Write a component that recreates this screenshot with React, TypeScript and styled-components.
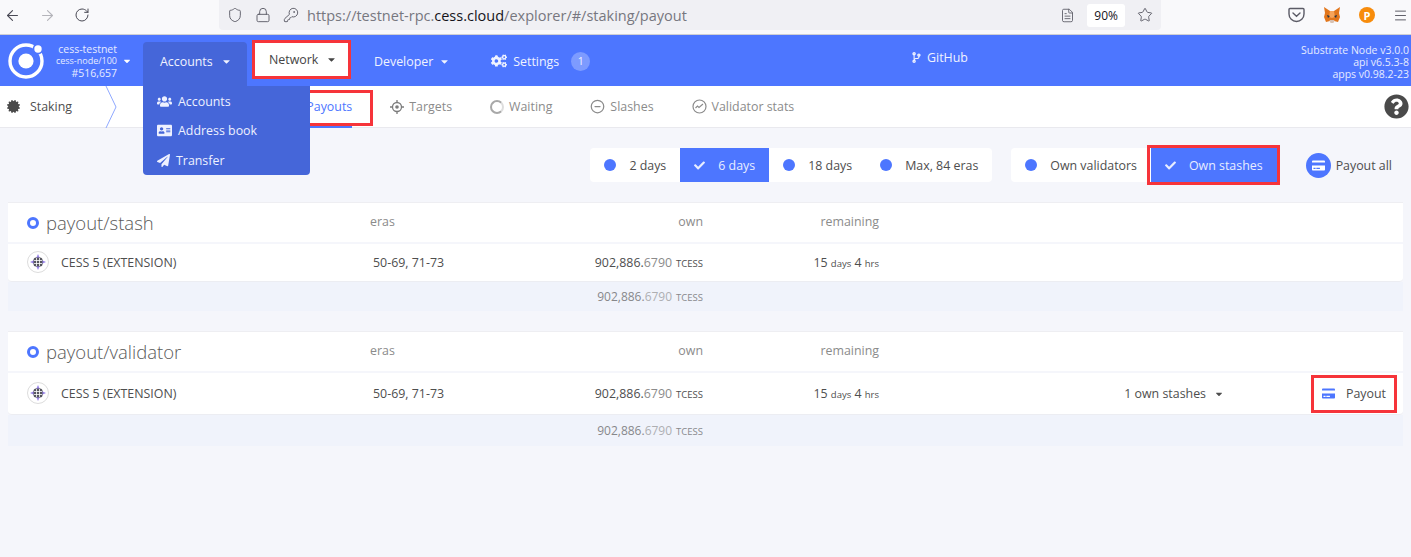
import { FC, ReactNode } from "react";

import styled, { createGlobalStyle } from "styled-components";

import {
  ArrowLeft,
  ArrowRight,
  FileText,
  KeyRound,
  Lock,
  Menu,
  RotateCw,
  Shield,
  Star,
} from "lucide-react";
import {
  FaAddressCard,
  FaCaretDown,
  FaCertificate,
  FaCheck,
  FaCodeBranch,
  FaCogs,
  FaCreditCard,
  FaPaperPlane,
  FaQuestionCircle,
  FaUsers,
} from "react-icons/fa";
import { FiMinusCircle } from "react-icons/fi";

const BLUE = "#4d76ff";
const DARK_BLUE = "#4566d9";
const TEXT = "#4e4e4e";
const MUTED = "#8b8b8b";
const RED = "#f6343a";

const GlobalStyle = createGlobalStyle`
  html, body {
    margin: 0;
    padding: 0;
    background: #f5f6fb;
    overflow: hidden;
  }
  body {
    font-family: "Open Sans", "Noto Sans", sans-serif;
    font-size: 12px;
    color: ${TEXT};
  }
`;

const Logo = () => (
  <svg width="38" height="38" viewBox="0 0 38 38">
    <circle cx="19" cy="19" r="16" fill="none" stroke="#fff" strokeWidth="3.4" />
    <circle cx="19" cy="19" r="7.6" fill="#fff" />
    <circle cx="31" cy="7" r="5.4" fill={BLUE} />
    <circle cx="31" cy="7" r="3.7" fill="#fff" />
  </svg>
);

const Pocket = () => (
  <svg width="17" height="16" viewBox="0 0 17 16" fill="none" stroke="#5b5b66" strokeWidth="1.4">
    <path d="M2 1.5h13a1 1 0 0 1 1 1V7a7.500 7.500 0 0 1-15 0V2.500a1 1 0 0 1 1-1z" />
    <path d="M5 6l3.500 3.200L12 6" strokeLinecap="round" />
  </svg>
);

const Fox = () => (
  <svg width="18" height="17" viewBox="0 0 18 17">
    <path d="M1 0l6 4h4l6-4-1 6 1 4-2 5-4-1-2 1-2-1-4 1-2-5 1-4z" fill="#e2761b" />
    <path d="M7 4h4l1 6-3 1-3-1z" fill="#f6a45a" />
    <path d="M4 8l3 1-2 2zM14 8l-3 1 2 2z" fill="#233447" />
    <path d="M6.500 13h5l-1 3h-3z" fill="#d7c1b3" />
  </svg>
);

const ChartCircle = () => (
  <svg width="15" height="15" viewBox="0 0 15 15" fill="none" stroke="#8b8b8b">
    <circle cx="7.500" cy="7.500" r="6.500" strokeWidth="1.200" />
    <path d="M3.500 9l2-2 1.500 1.500L11 5" strokeWidth="1.100" />
  </svg>
);

const TargetIcon = () => (
  <svg width="14" height="14" viewBox="0 0 14 14" fill="none" stroke="#7c7c7c">
    <circle cx="7" cy="7" r="4.500" strokeWidth="1.300" />
    <circle cx="7" cy="7" r="1.800" fill="#7c7c7c" stroke="none" />
    <path d="M7 0v2.500M7 11.500V14M0 7h2.500M11.500 7H14" strokeWidth="1.300" />
  </svg>
);

const Identicon = () => (
  <IdenticonWrap>
    <svg width="22" height="22" viewBox="0 0 22 22">
      <circle cx="11" cy="11" r="10.500" fill="#fff" stroke="#dcdcdc" />
      <path d="M11 3l2.500 5.500L19 11l-5.500 2.500L11 19l-2.500-5.500L3 11l5.500-2.500z" fill="#9b86e8" />
      <rect x="6.500" y="6.500" width="9" height="9" rx="2.500" fill="#55555f" />
      <path d="M9.500 7v8M12.500 7v8M7 9.500h8M7 12.500h8" stroke="#fff" strokeWidth="0.800" />
    </svg>
  </IdenticonWrap>
);

const AccountCell: FC = () => (
  <NameCell>
    <Identicon />
    <span>CESS 5 (EXTENSION)</span>
  </NameCell>
);

const Balance: FC<{ faded?: boolean }> = ({ faded }) => (
  <BalanceValue $faded={faded}>
    902,886.<Decimals>6790</Decimals>
    <Unit>TCESS</Unit>
  </BalanceValue>
);

const Remaining: FC = () => (
  <RemainingValue>
    15 <small>days</small> 4 <small>hrs</small>
  </RemainingValue>
);

const PayoutSection: FC<{ title: string; action?: ReactNode }> = ({ title, action }) => (
  <Section>
    <HeaderRow>
      <Title>
        <TitleDot />
        {title}
      </Title>
      <HeaderLabel>eras</HeaderLabel>
      <HeaderLabel $right>own</HeaderLabel>
      <HeaderLabel $right>remaining</HeaderLabel>
    </HeaderRow>
    <BodyRow $tall={!!action}>
      <AccountCell />
      <ErasCell>50-69, 71-73</ErasCell>
      <Balance />
      <Remaining />
      <ActionCell>{action}</ActionCell>
    </BodyRow>
    <FooterRow $tall={!!action}>
      <span />
      <span />
      <Balance faded />
    </FooterRow>
  </Section>
);

const App: FC = () => (
  <>
    <GlobalStyle />
    <BrowserBar>
      <NavButtons>
        <ArrowLeft size={17} strokeWidth={1.5} color="#4a4a55" />
        <ArrowRight size={17} strokeWidth={1.5} color="#b4b4ba" />
        <RotateCw size={16} strokeWidth={1.5} color="#4a4a55" />
      </NavButtons>
      <UrlBar>
        <UrlIcons>
          <Shield size={16} strokeWidth={1.4} />
          <Lock size={16} strokeWidth={1.4} />
          <KeyRound size={16} strokeWidth={1.4} />
        </UrlIcons>
        <UrlText>
          https://testnet-rpc.<strong>cess.cloud</strong>/explorer/#/staking/payout
        </UrlText>
        <UrlEnd>
          <FileText size={15} strokeWidth={1.4} />
          <ZoomBadge>90%</ZoomBadge>
          <Star size={16} strokeWidth={1.4} />
        </UrlEnd>
      </UrlBar>
      <Extensions>
        <Pocket />
        <Fox />
        <PBadge>P</PBadge>
        <Menu size={15} strokeWidth={1.4} color="#4a4a55" />
      </Extensions>
    </BrowserBar>

    <AppBar>
      <Logo />
      <ChainInfo>
        <span>cess-testnet</span>
        <ChainNode>cess-node/100</ChainNode>
        <span>#516,657</span>
      </ChainInfo>
      <ChainCaret>
        <FaCaretDown size={10} />
      </ChainCaret>
      <MainMenu>
        <AccountsItem>
          Accounts <FaCaretDown size={11} />
          <Dropdown>
            <DropdownItem>
              <FaUsers size={15} />
              Accounts
            </DropdownItem>
            <DropdownItem>
              <FaAddressCard size={15} />
              Address book
            </DropdownItem>
            <DropdownItem>
              <FaPaperPlane size={13} />
              Transfer
            </DropdownItem>
          </Dropdown>
        </AccountsItem>
        <NetworkItem>
          Network <FaCaretDown size={11} />
        </NetworkItem>
        <MenuItem>
          Developer <FaCaretDown size={11} />
        </MenuItem>
        <MenuItem>
          <FaCogs size={16} />
          Settings
          <CountBadge>1</CountBadge>
        </MenuItem>
      </MainMenu>
      <GitHubLink>
        <FaCodeBranch size={11} />
        GitHub
      </GitHubLink>
      <Versions>
        <span>Substrate Node v3.0.0</span>
        <span>api v6.5.3-8</span>
        <span>apps v0.98.2-23</span>
      </Versions>
    </AppBar>

    <SubNav>
      <SectionLabel>
        <FaCertificate size={13} color="#4a4a4a" />
        Staking
        <Chevron width="12" height="42" viewBox="0 0 12 42">
          <path d="M1 0l10 21L1 42" fill="none" stroke="#8fa8ff" />
        </Chevron>
      </SectionLabel>
      <Tabs>
        <Tab>Account actions</Tab>
        <PayoutsTab>Payouts</PayoutsTab>
        <Tab>
          <TargetIcon />
          Targets
        </Tab>
        <Tab>
          <WaitingRing />
          Waiting
        </Tab>
        <Tab>
          <FiMinusCircle size={15} />
          Slashes
        </Tab>
        <Tab>
          <ChartCircle />
          Validator stats
        </Tab>
      </Tabs>
      <HelpIcon>
        <FaQuestionCircle size={25} />
      </HelpIcon>
    </SubNav>

    <Content>
      <Controls>
        <ToggleGroup>
          <Toggle>
            <Dot />2 days
          </Toggle>
          <Toggle $active>
            <FaCheck size={11} />6 days
          </Toggle>
          <Toggle>
            <Dot />
            18 days
          </Toggle>
          <Toggle>
            <Dot />
            Max, 84 eras
          </Toggle>
        </ToggleGroup>
        <ToggleGroup>
          <Toggle>
            <Dot />
            Own validators
          </Toggle>
          <Toggle $active $marked>
            <FaCheck size={11} />
            Own stashes
          </Toggle>
        </ToggleGroup>
        <PayoutAll>
          <PayoutAllIcon>
            <FaCreditCard size={13} />
          </PayoutAllIcon>
          Payout all
        </PayoutAll>
      </Controls>

      <PayoutSection title="payout/stash" />
      <PayoutSection
        title="payout/validator"
        action={
          <>
            <StashCount>
              1 own stashes <FaCaretDown size={10} />
            </StashCount>
            <PayoutButton>
              <FaCreditCard size={13} color={BLUE} />
              Payout
            </PayoutButton>
          </>
        }
      />
    </Content>
  </>
);

export default App;

const BrowserBar = styled.div`
  display: flex;
  align-items: flex-start;
  height: 34px;
  background: #f9f9fb;
  border-bottom: 1px solid #cfcfd3;
`;

const NavButtons = styled.div`
  display: flex;
  align-items: center;
  gap: 18px;
  width: 219px;
  height: 30px;
  padding-left: 4px;
  box-sizing: border-box;
`;

const UrlBar = styled.div`
  display: flex;
  align-items: center;
  width: 942px;
  height: 30px;
  background: #f0f0f4;
  border-radius: 0 0 4px 4px;
  color: #5b5b66;
`;

const UrlIcons = styled.div`
  display: flex;
  align-items: center;
  gap: 12px;
  padding-left: 8px;
`;

const UrlText = styled.div`
  flex: 1;
  margin-left: 8px;
  font-size: 14.5px;
  color: #77777f;
  strong {
    font-weight: 400;
    color: #15141a;
  }
`;

const UrlEnd = styled.div`
  display: flex;
  align-items: center;
  gap: 12px;
  padding-right: 8px;
`;

const ZoomBadge = styled.span`
  padding: 3px 7px;
  background: #fff;
  border-radius: 3px;
  font-size: 12px;
  color: #15141a;
`;

const Extensions = styled.div`
  display: flex;
  align-items: center;
  gap: 18px;
  height: 30px;
  padding-left: 127px;
`;

const PBadge = styled.span`
  display: flex;
  align-items: center;
  justify-content: center;
  width: 16px;
  height: 16px;
  border-radius: 50%;
  background: #f78c0c;
  color: #fff;
  font-size: 11px;
  font-weight: 700;
`;

const AppBar = styled.header`
  position: relative;
  display: flex;
  align-items: center;
  height: 51px;
  padding-left: 7px;
  background: ${BLUE};
  color: #fff;
`;

const ChainInfo = styled.div`
  display: flex;
  flex-direction: column;
  align-items: flex-end;
  width: 72px;
  font-size: 10.5px;
  line-height: 12px;
  color: #e6ebff;
`;

const ChainNode = styled.span`
  font-size: 9px;
`;

const ChainCaret = styled.span`
  display: flex;
  margin-left: 5px;
  width: 21px;
`;

const MainMenu = styled.nav`
  display: flex;
  align-items: stretch;
  align-self: flex-end;
  height: 44px;
  color: #f0f3ff;
  font-size: 12.4px;
`;

const MenuItem = styled.div`
  display: flex;
  align-items: center;
  gap: 6px;
  padding: 0 18px 6px 23px;
  svg {
    flex-shrink: 0;
  }
`;

const AccountsItem = styled(MenuItem)`
  position: relative;
  width: 104px;
  box-sizing: border-box;
  padding: 0 0 6px 17px;
  gap: 8px;
  background: ${DARK_BLUE};
  border-radius: 4px 4px 0 0;
`;

const NetworkItem = styled(MenuItem)`
  align-self: flex-start;
  box-sizing: border-box;
  width: 99px;
  height: 39px;
  margin: -2px 0 0 5px;
  padding: 0 0 0 14px;
  gap: 8px;
  background: #fff;
  color: #444;
  border: 3px solid ${RED};
`;

const Dropdown = styled.div`
  position: absolute;
  top: 44px;
  left: 0;
  z-index: 5;
  display: flex;
  flex-direction: column;
  width: 167px;
  height: 89px;
  padding-top: 1px;
  box-sizing: border-box;
  background: ${DARK_BLUE};
  border-radius: 0 0 4px 4px;
`;

const DropdownItem = styled.div`
  display: flex;
  align-items: center;
  gap: 6px;
  height: 32px;
  padding-left: 14px;
  font-size: 12.4px;
  color: #eef1ff;
`;

const CountBadge = styled.span`
  display: flex;
  align-items: center;
  justify-content: center;
  width: 19px;
  height: 19px;
  margin-left: 6px;
  border-radius: 50%;
  background: #7d9bff;
  font-size: 10.5px;
`;

const GitHubLink = styled.div`
  position: absolute;
  top: 0;
  bottom: 6px;
  left: 911px;
  display: flex;
  align-items: center;
  gap: 5px;
  font-size: 12.4px;
  color: #f0f3ff;
`;

const Versions = styled.div`
  position: absolute;
  top: 9px;
  right: 2px;
  display: flex;
  flex-direction: column;
  align-items: flex-end;
  font-size: 10.5px;
  line-height: 12px;
  color: #e6ebff;
`;

const SubNav = styled.div`
  display: flex;
  align-items: center;
  height: 41px;
  background: #fff;
  border-bottom: 1px solid #e9e9ee;
  font-size: 12.4px;
`;

const SectionLabel = styled.div`
  position: relative;
  display: flex;
  align-items: center;
  gap: 10px;
  box-sizing: border-box;
  width: 117px;
  height: 41px;
  padding-left: 7px;
  color: ${TEXT};
`;

const Chevron = styled.svg`
  position: absolute;
  top: 0;
  right: 0;
`;

const Tabs = styled.div`
  display: flex;
  align-items: center;
  height: 41px;
  margin-left: 60px;
`;

const Tab = styled.div`
  display: flex;
  align-items: center;
  gap: 5px;
  height: 100%;
  margin-right: 38px;
  color: ${MUTED};
  white-space: nowrap;
`;

const PayoutsTab = styled(Tab)`
  position: relative;
  color: ${BLUE};
  &::before {
    content: "";
    position: absolute;
    top: 4px;
    bottom: 1px;
    left: -15px;
    right: -21px;
    border: 3px solid ${RED};
  }
  &::after {
    content: "";
    position: absolute;
    left: 0;
    right: 0;
    bottom: -1px;
    height: 2px;
    background: ${BLUE};
  }
`;

const WaitingRing = styled.span`
  width: 10px;
  height: 10px;
  border: 2.500px solid #a8a8a8;
  border-right-color: #dddddd;
  border-radius: 50%;
`;

const HelpIcon = styled.div`
  display: flex;
  margin-left: auto;
  padding-right: 2px;
  color: #4a4a4a;
`;

const Content = styled.main`
  height: 429px;
  padding: 20px 8px 0;
  background: #f5f6fb;
`;

const Controls = styled.div`
  display: flex;
  justify-content: flex-end;
  align-items: center;
  height: 34px;
  margin-bottom: 20px;
  padding-right: 11px;
`;

const ToggleGroup = styled.div`
  display: flex;
  height: 34px;
  margin-right: 19px;
  background: #fff;
  border-radius: 4px;
  &:nth-child(2) {
    margin-right: 29px;
  }
`;

const Toggle = styled.div<{ $active?: boolean; $marked?: boolean }>`
  position: relative;
  display: flex;
  align-items: center;
  gap: 13px;
  padding: 0 14px;
  background: ${(props) => (props.$active ? BLUE : "transparent")};
  color: ${(props) => (props.$active ? "#e8edff" : TEXT)};
  white-space: nowrap;
  font-size: 12.4px;
  ${(props) =>
    props.$marked &&
    `&::after {
      content: "";
      position: absolute;
      inset: -3px -3px -3px -4px;
      border: 3px solid ${RED};
    }`}
`;

const Dot = styled.span`
  width: 12px;
  height: 12px;
  border-radius: 50%;
  background: ${BLUE};
`;

const PayoutAll = styled.div`
  display: flex;
  align-items: center;
  gap: 5px;
  font-size: 12.4px;
`;

const PayoutAllIcon = styled.span`
  display: flex;
  align-items: center;
  justify-content: center;
  width: 25px;
  height: 25px;
  border-radius: 50%;
  background: ${BLUE};
  color: #fff;
`;

const Section = styled.section`
  margin-bottom: 20px;
`;

const columns = "362px 130px 203px 176px 1fr";

const HeaderRow = styled.div`
  display: grid;
  grid-template-columns: ${columns};
  align-items: center;
  height: 40px;
  background: #fff;
  border-top: 1px solid #eeeef2;
  box-sizing: border-box;
  margin-bottom: 2px;
`;

const Title = styled.h1`
  display: flex;
  align-items: center;
  gap: 7px;
  margin: 0;
  padding-left: 19px;
  font-size: 18.5px;
  font-weight: 300;
  color: #5a5a5a;
`;

const TitleDot = styled.span`
  width: 6px;
  height: 6px;
  border: 3px solid ${BLUE};
  border-radius: 50%;
  background: #fff;
`;

const HeaderLabel = styled.span<{ $right?: boolean }>`
  text-align: ${(props) => (props.$right ? "right" : "left")};
  color: ${MUTED};
  font-size: 12.4px;
  margin-top: -2px;
`;

const BodyRow = styled.div<{ $tall?: boolean }>`
  display: grid;
  grid-template-columns: ${columns};
  align-items: center;
  height: ${(props) => (props.$tall ? "41px" : "37px")};
  background: #fff;
  border-bottom: 1px solid #ecedf2;
  border-radius: 0 0 4px 4px;
  box-sizing: content-box;
  font-size: 12.4px;
`;

const FooterRow = styled.div<{ $tall?: boolean }>`
  display: grid;
  grid-template-columns: ${columns};
  align-items: center;
  height: ${(props) => (props.$tall ? "31px" : "29px")};
  background: #f0f3fb;
`;

const NameCell = styled.div`
  display: flex;
  align-items: center;
  gap: 12px;
  padding-left: 19px;
`;

const IdenticonWrap = styled.span`
  display: flex;
  margin-top: -2px;
`;

const ErasCell = styled.div`
  padding-left: 3px;
`;

const BalanceValue = styled.div<{ $faded?: boolean }>`
  text-align: right;
  white-space: nowrap;
  opacity: ${(props) => (props.$faded ? 0.65 : 1)};
`;

const Decimals = styled.span`
  color: ${MUTED};
`;

const Unit = styled.span`
  margin-left: 4px;
  font-size: 9.500px;
`;

const RemainingValue = styled.div`
  text-align: right;
  small {
    font-size: 9.500px;
  }
`;

const ActionCell = styled.div`
  display: flex;
  align-items: center;
  justify-content: flex-end;
  height: 100%;
  padding-right: 6px;
`;

const StashCount = styled.span`
  display: flex;
  align-items: center;
  gap: 8px;
  margin-right: 87px;
`;

const PayoutButton = styled.div`
  display: flex;
  align-items: center;
  justify-content: center;
  gap: 11px;
  box-sizing: border-box;
  width: 86px;
  height: 38px;
  border: 3px solid ${RED};
`;
